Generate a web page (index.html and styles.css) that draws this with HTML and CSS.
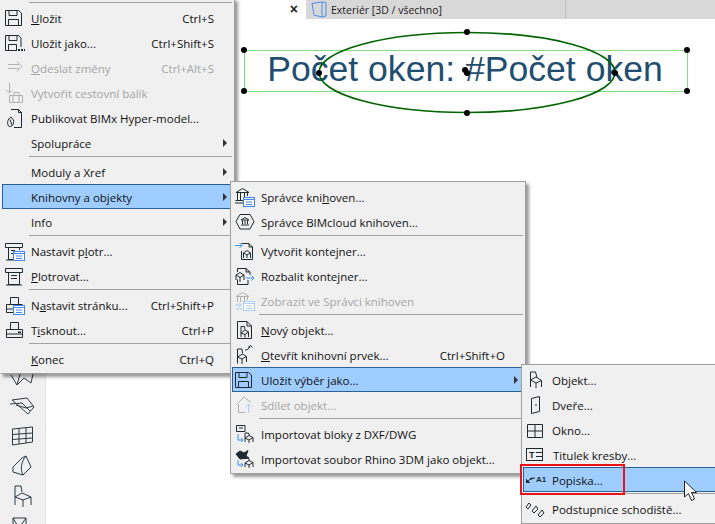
FILE: index.html
```html
<!DOCTYPE html>
<html lang="cs">
<head>
<meta charset="utf-8">
<title>Archicad menu</title>
<link rel="stylesheet" href="styles.css">
</head>
<body>
<svg class="defs" width="0" height="0">
  <symbol id="save" viewBox="0 0 21 21"><path d="M1.500 3.500H14.500L17.500 6V18.500H1.500ZM5 3.500V8.500H13V3.500M4.500 18.500V12.500H14.500V18.500"/></symbol>
  <symbol id="saveas" viewBox="0 0 21 21"><path d="M1.500 3.500H14.500L17 6V15M13 18.500H1.500V3.500M5 3.500V8.500H13V3.500M4.500 18.500V12.500H12.500V18.500"/><path class="fill" d="M14 17h2v2h-2zM17 17h2v2h-2zM20 17h1v2h-1z"/></symbol>
  <symbol id="send" viewBox="0 0 21 21"><path d="M4 7.500H15M4 11.500H15M13 4.500L18 9.500L13 14.500"/></symbol>
  <symbol id="pack" viewBox="0 0 21 21"><path d="M5.500 1V11M2.500 8L5.500 11L8.500 8M5.500 13.500H18.500V20.500H5.500ZM9 13.500V20.500M15 13.500V20.500M10 13.500V10.500H15V13.500"/></symbol>
  <symbol id="bimx" viewBox="0 0 21 21"><path d="M7 2.500H14.500L17.500 5.500V20.500H10M14.500 2.500V5.500H17.500"/><path d="M7 10C3.500 12 2.500 16.500 5 19.500C8.500 20 10 17 9.500 13ZM6 12.500L8 18"/></symbol>
  <symbol id="plot" viewBox="0 0 21 21"><path d="M1.500 3.500H18.500V7.500H1.500ZM4.500 7.500V19.500H15.500V7.500M2 20H18M7 10.500H13M7 13.500H13"/></symbol>
  <symbol id="plotset" viewBox="0 0 21 21"><path d="M1.500 3.500H18.500V7.500H1.500ZM4.500 7.500V19.500H9M15.500 7.500V10M2 20H9M7 10.500H11M7 13.500H10"/><rect class="badge" x="9.500" y="11.500" width="11" height="9"/><path class="badgeline" d="M9.500 13.500H20.500M12 16H18M12 18.500H18"/></symbol>
  <symbol id="print" viewBox="0 0 21 21"><path d="M6.500 10V3.500H14.500V10M2.500 10.500H18.500V18.500H2.500ZM2 15H19"/><path class="fill" d="M14 12.500h3v1.500h-3z"/></symbol>
  <symbol id="pageset" viewBox="0 0 21 21"><path d="M6.500 10V3.500H14.500V10M9 18.500H2.500V10.500H18.500M2 15H9"/><rect class="badge" x="9.500" y="11.500" width="11" height="9"/><path class="badgeline" d="M9.500 13.500H20.500M12 16H18M12 18.500H18"/></symbol>
  <symbol id="lib" viewBox="0 0 21 21"><path d="M2 6.500L8.500 2.500L15 6.500ZM3.500 7V14M6.500 7V14M10.500 7V11M13.500 7V10M1.500 14.500H9M1 17H9"/><rect class="badge" x="9.500" y="11.500" width="11" height="9"/><path class="badgeline" d="M9.500 13.500H20.500M12 16H18M12 18.500H18"/></symbol>
  <symbol id="libcloud" viewBox="0 0 21 21"><path d="M6 3.500H16L20 10.500L16 18H6L2 10.500Z"/><path d="M7 9L11 6.500L15 9ZM8.500 9.500V13M11 9.500V13M13.500 9.500V13M7 14H15"/></symbol>
  <symbol id="make" viewBox="0 0 21 21"><path d="M7.500 3.500H15L18.500 7V19.500H7.500V11M15 3.500V7H18.500"/><path d="M9.500 13L13 10.500L16.500 13L13 15ZM9.500 13V18M13 15V18M16.500 13V18"/><path class="blue" d="M1 5.500H8M5.500 3L8 5.500L5.500 8"/></symbol>
  <symbol id="unpack" viewBox="0 0 21 21"><path d="M3.500 7V3.500H12L16 7V10M3.500 14.500V19.500H14V15M12 3.500V7H16"/><path d="M2 10L6 7.500L10 10L6 12.500ZM2 10V15M6 12.500V17M10 10V15"/><path class="blue" d="M12 13H20M17.500 10.500L20 13L17.500 15.500"/></symbol>
  <symbol id="libshow" viewBox="0 0 21 21"><path d="M2 6.500L8.500 2.500L15 6.500ZM3.500 7V12M6.500 7V12M10.500 7V11M13.500 7V10"/><rect class="badge" x="9.500" y="11.500" width="11" height="9"/><path class="badgeline" d="M9.500 13.500H20.500M12 16H18M12 18.500H18"/><path class="blue" d="M1 15H7M5 13L7 15L5 17M8 19H2"/></symbol>
  <symbol id="newobj" viewBox="0 0 21 21"><path d="M3.500 2.500H13L17.500 7V19.500H3.500ZM13 2.500V7H17.500"/><path d="M7 14V7.500H10.500L11 10.500M7 14L11 11L14.500 13L11 15.500ZM7 14V18M11 15.500V18.500M14.500 13V18"/></symbol>
  <symbol id="open" viewBox="0 0 21 21"><path d="M3.500 13V5H8L8.500 9.500M3.500 13L8.500 10L12.500 12.500L8 15ZM3.500 13V19.500M8 15V20M12.500 12.500V18"/><path d="M11 6C13 6 15.500 5 16 2.500M14 3.500L16.500 1.500L18.500 3.500"/></symbol>
  <symbol id="share" viewBox="0 0 21 21"><path d="M2.500 10.500L10 3L17 8.500M4.500 10V18.500H11"/><path class="blue" d="M14.500 19V10M12 12.500L14.500 10L17 12.500"/></symbol>
  <symbol id="dxf" viewBox="0 0 21 21"><path d="M2.500 2.500H11V8.500H2.500ZM5 5H9"/><path d="M11 10H14.500L15.500 12.500M11 10V15M11 15L15 12.500L19 14.500L15 17ZM11 15V19M15 17V20M19 14.500V19"/><path class="blue" d="M4 11V17H9M7 15L9 17L7 19"/></symbol>
  <symbol id="rhino" viewBox="0 0 21 21"><path class="heavy" d="M2 6L6 3L10 5L14 2.500L12 8L15 10L6 11Z"/><path d="M11 10H14.500L15.500 12.500M11 15L15 12.500L19 14.500L15 17ZM11 15V19M15 17V20M19 14.500V19"/><path class="blue" d="M4 12V17H9M7 15L9 17L7 19"/></symbol>
  <symbol id="chair" viewBox="0 0 21 21"><path d="M5.500 11V3H10.500L12 8.500M5.500 11L11 8L16.500 11.500L11 14ZM5.500 11V18M11 14V19M16.500 11.500V18"/></symbol>
  <symbol id="door" viewBox="0 0 21 21"><path d="M6.500 4.500L14.500 2.500V17.500L6.500 19.500ZM11 10V12"/></symbol>
  <symbol id="window" viewBox="0 0 21 21"><path d="M2.500 5.500H17.500V18.500H2.500ZM2.500 12H17.500M10 5.500V18.500"/></symbol>
  <symbol id="riser" viewBox="0 0 21 21"><path d="M1 9L4 5L6 7L3 11ZM7 13L11 8L13 11L9 15ZM13 17L17 12L19 15L15 19Z"/></symbol>
  <symbol id="cube" viewBox="0 0 16 17"><path d="M1 2.500L11 1L15 1.500V15L11 16L3 14ZM11 1V16"/></symbol>
  <symbol id="p-wall" viewBox="0 0 45 30"><path d="M11 14L17 24L24 17L31 22L33 13M17 24L20 13"/></symbol>
  <symbol id="p-slab" viewBox="0 0 45 30"><path d="M12 9L27 7L34 16L28 23ZM10 13L22 12L30 20M16 14L26 17L33 15"/></symbol>
  <symbol id="p-mesh" viewBox="0 0 45 30"><path d="M12.500 8L32.500 6V21L12.500 24ZM12.500 13.500L32.500 12M12.500 18.500L32.500 17M19 7.500V23M26 7V22"/></symbol>
  <symbol id="p-shell" viewBox="0 0 45 30"><path d="M13 16L22 7L26 5L31 16L23 24L13 21ZM23 24C20 18 21 11 26 5"/></symbol>
  <symbol id="p-chair" viewBox="0 0 45 30"><path d="M15 16V5H21L22 11M15 16L22 12L31 16L23 19ZM15 16V24M23 19V26M31 16V24"/></symbol>
  <symbol id="p-last" viewBox="0 0 45 30"><path d="M13 7H26V22H13ZM13 7L19 17L26 7"/></symbol>
</svg>

<div class="desktop">
  <aside class="palette">
    <svg class="tool"><use href="#p-wall"/></svg>
    <svg class="tool"><use href="#p-slab"/></svg>
    <svg class="tool"><use href="#p-mesh"/></svg>
    <svg class="tool"><use href="#p-shell"/></svg>
    <svg class="tool"><use href="#p-chair"/></svg>
    <svg class="tool"><use href="#p-last"/></svg>
  </aside>
  <main class="workspace">
    <div class="tabstrip">
      <div class="close-slot"><span class="close">×</span></div>
      <div class="tabs">
        <div class="tab"><svg class="cube"><use href="#cube"/></svg><span>Exteriér [3D / všechno]</span></div>
      </div>
    </div>
    <svg class="drawing" viewBox="46 19 669 505">
      <rect class="frame" x="244.500" y="50.500" width="443" height="41"/>
      <text class="label-text" x="465" y="81" text-anchor="middle">Počet oken: #Počet oken</text>
      <ellipse class="oval" cx="467" cy="72.500" rx="148" ry="40"/>
      <g class="handles">
        <circle cx="244" cy="50" r="3"/><circle cx="687" cy="50" r="3"/>
        <circle cx="244" cy="91" r="3"/><circle cx="687" cy="91" r="3"/>
        <circle cx="467" cy="32" r="3"/><circle cx="467" cy="113" r="3"/>
        <circle cx="319" cy="73" r="3"/><circle cx="615" cy="73" r="3"/>
        <circle cx="465" cy="70" r="3"/><circle cx="467" cy="73" r="3"/>
      </g>
    </svg>
  </main>

  <nav class="menu menu-file">
    <div class="sep"></div>
    <div class="row"><svg class="ic"><use href="#save"/></svg><span class="name"><u>U</u>ložit</span><span class="key">Ctrl+S</span></div>
    <div class="row"><svg class="ic"><use href="#saveas"/></svg><span class="name">Uložit jako...</span><span class="key">Ctrl+Shift+S</span></div>
    <div class="row off"><svg class="ic"><use href="#send"/></svg><span class="name"><u>O</u>deslat změny</span><span class="key">Ctrl+Alt+S</span></div>
    <div class="row off"><svg class="ic"><use href="#pack"/></svg><span class="name">Vytvořit cestovní balík</span></div>
    <div class="row"><svg class="ic"><use href="#bimx"/></svg><span class="name">Publikovat BIMx Hyper-model...</span></div>
    <div class="row"><span class="ic"></span><span class="name">Spolupráce</span><i class="arrow"></i></div>
    <div class="sep"></div>
    <div class="row"><span class="ic"></span><span class="name">Moduly a Xref</span><i class="arrow"></i></div>
    <div class="row on"><span class="ic"></span><span class="name">Knihovny a objekty</span><i class="arrow"></i></div>
    <div class="row"><span class="ic"></span><span class="name">Info</span><i class="arrow"></i></div>
    <div class="sep"></div>
    <div class="row"><svg class="ic"><use href="#plotset"/></svg><span class="name">Nastavit p<u>l</u>otr...</span></div>
    <div class="row"><svg class="ic"><use href="#plot"/></svg><span class="name"><u>P</u>lotrovat...</span></div>
    <div class="sep"></div>
    <div class="row"><svg class="ic"><use href="#pageset"/></svg><span class="name">N<u>a</u>stavit stránku...</span><span class="key">Ctrl+Shift+P</span></div>
    <div class="row"><svg class="ic"><use href="#print"/></svg><span class="name">T<u>i</u>sknout...</span><span class="key">Ctrl+P</span></div>
    <div class="sep"></div>
    <div class="row"><span class="ic"></span><span class="name"><u>K</u>onec</span><span class="key">Ctrl+Q</span></div>
  </nav>

  <nav class="menu menu-lib">
    <div class="row"><svg class="ic"><use href="#lib"/></svg><span class="name">Správce kni<u>h</u>oven...</span></div>
    <div class="row"><svg class="ic"><use href="#libcloud"/></svg><span class="name">Správce BIMcloud knihoven...</span></div>
    <div class="sep"></div>
    <div class="row"><svg class="ic"><use href="#make"/></svg><span class="name">Vytvořit kontejner...</span></div>
    <div class="row"><svg class="ic"><use href="#unpack"/></svg><span class="name">Rozbalit kontejner...</span></div>
    <div class="row off"><svg class="ic"><use href="#libshow"/></svg><span class="name">Zobrazit ve Správci knihoven</span></div>
    <div class="sep"></div>
    <div class="row"><svg class="ic"><use href="#newobj"/></svg><span class="name"><u>N</u>ový objekt...</span></div>
    <div class="row"><svg class="ic"><use href="#open"/></svg><span class="name"><u>O</u>tevřít knihovní prvek...</span><span class="key">Ctrl+Shift+O</span></div>
    <div class="row on"><svg class="ic"><use href="#save"/></svg><span class="name">Uložit výběr jako...</span><i class="arrow"></i></div>
    <div class="row off"><svg class="ic"><use href="#share"/></svg><span class="name">Sdílet objekt...</span></div>
    <div class="sep"></div>
    <div class="row"><svg class="ic"><use href="#dxf"/></svg><span class="name">Importovat bloky z DXF/DWG</span></div>
    <div class="row"><svg class="ic"><use href="#rhino"/></svg><span class="name">Importovat soubor Rhino 3DM jako objekt...</span></div>
  </nav>

  <nav class="menu menu-save">
    <div class="row"><svg class="ic"><use href="#chair"/></svg><span class="name">Objekt...</span></div>
    <div class="row"><svg class="ic"><use href="#door"/></svg><span class="name">Dveře...</span></div>
    <div class="row"><svg class="ic"><use href="#window"/></svg><span class="name">Okno...</span></div>
    <div class="row"><span class="ic title-ic"><b>T</b><em></em></span><span class="name">Titulek kresby...</span></div>
    <div class="row on"><span class="ic label-ic"><svg class="label-arrow" width="9" height="7" viewBox="0 0 9 7"><path d="M0 7V3L4 7ZM2 5L5 2H9"/></svg>A1</span><span class="name">Popiska...</span></div>
    <div class="sep"></div>
    <div class="row"><svg class="ic"><use href="#riser"/></svg><span class="name">Podstupnice schodiště...</span></div>
  </nav>

  <div class="callout"></div>
  <svg class="pointer" width="16" height="22" viewBox="0 0 16 22"><path d="M1.500 1V17L5.500 13.500L8.500 20.500L11.500 19L8.500 12.500H13.500Z"/></svg>
</div>
</body>
</html>
```
FILE: styles.css
```css
* { box-sizing: border-box; }
html, body { margin: 0; height: 100%; }
body { width: 715px; height: 524px; overflow: hidden; background: #fff; font-family: "Open Sans", "Noto Sans", sans-serif; }
.defs { position: absolute; }
symbol path, symbol rect { fill: none; stroke: currentColor; stroke-width: 1; }
symbol .fill { fill: currentColor; stroke: none; }
symbol .heavy { fill: currentColor; }
symbol .blue { stroke: var(--accent, #3f8fef); }
symbol .badge { fill: #fff; stroke: var(--accent, #3f86ee); }
symbol .badgeline { stroke: var(--accent, #3f86ee); }

.desktop { position: relative; display: flex; width: 715px; height: 524px; overflow: hidden; }
.palette { flex: 0 0 46px; display: flex; flex-direction: column; padding-top: 361px; background: #f0f0f0; border-right: 1px solid #e2e2e2; color: #2b3a42; }
.tool { flex: 0 0 30px; width: 45px; height: 30px; }
.workspace { flex: 1; display: flex; flex-direction: column; min-width: 0; }
.tabstrip { display: flex; flex: 0 0 19px; }
.close-slot { flex: 0 0 260px; display: flex; justify-content: flex-end; align-items: center; padding-right: 8px; }
.close { font: bold 14px/19px "Liberation Sans", sans-serif; color: #222; }
.tabs { flex: 1; background: #d8d8d8; }
.tab { display: flex; align-items: center; gap: 4px; width: 260px; height: 19px; padding-left: 5px; border-right: 1px solid #c0c0c0; font-size: 10.500px; color: #1a1a1a; }
.cube { width: 16px; height: 17px; color: #4a8df0; }
.drawing { width: 669px; height: 505px; display: block; }
.frame { fill: none; stroke: #7fdc7f; stroke-width: 1; }
.label-text { font: 35.600px "Liberation Sans", sans-serif; fill: #1f4e70; }
.oval { fill: none; stroke: #006400; stroke-width: 1.700; }
.handles circle { fill: #000; }

.menu { position: absolute; display: flex; flex-direction: column; padding: 2px 0; background: #f0f0f0; border: 1px solid #a0a0a0; box-shadow: 3px 3px 3px rgba(0,0,0,.4); font-size: 11.500px; color: #111; }
.menu-file { left: 0; top: -2px; width: 235px; border-left-color: #f0f0f0; }
.menu-lib { left: 230px; top: 181px; width: 296px; }
.menu-save { left: 521px; top: 364px; width: 200px; }
.row { display: flex; align-items: center; flex: 0 0 25px; margin: 0 1px; padding-right: 18px; border: 1px solid transparent; position: relative; white-space: nowrap; }
.row.on { background: #9fcdff; border-color: #2a6098; }
.row.off { color: #a6a6a6; --accent: #a9cdf5; }
.ic { flex: 0 0 21px; width: 21px; height: 21px; margin: 0 6px 0 1px; color: #1f2a30; }
.row.off .ic { color: #b2b2b2; }
.name { flex: 1; padding-top: 2px; }
.key { padding-top: 2px; }
.arrow { position: absolute; right: 5px; top: 8px; width: 0; height: 0; border-left: 4px solid #333; border-top: 4px solid transparent; border-bottom: 4px solid transparent; }
.sep { flex: 0 0 4px; margin-left: 28px; margin-right: 2px; padding-top: 1px; }
.sep::before { content: ""; display: block; height: 1px; background: #a0a0a0; }
.menu-save .row { padding-right: 4px; }

.title-ic { display: flex; align-items: center; gap: 1px; height: 13px; border: 1px solid #1f2a30; padding-left: 2px; font-size: 9px; flex-basis: 17px; width: 17px; margin-right: 10px; margin-left: 2px; }
.title-ic b { font-family: "Liberation Sans", sans-serif; }
.title-ic em { display: block; width: 6px; height: 5px; border-top: 1px solid #1f2a30; border-bottom: 1px solid #1f2a30; }
.label-ic { display: flex; align-items: center; gap: 1px; font: bold 8px "Liberation Sans", sans-serif; flex-basis: 21px; margin-left: 2px; margin-right: 5px; }
.label-arrow path { fill: #1f2a30; stroke: #1f2a30; stroke-width: .7; }
.callout { position: absolute; left: 520px; top: 464px; width: 105px; height: 31px; border: 2px solid #e8141c; }
.pointer { position: absolute; left: 683px; top: 480px; }
.pointer path { fill: #fff; stroke: #222; stroke-width: 1; }
```
